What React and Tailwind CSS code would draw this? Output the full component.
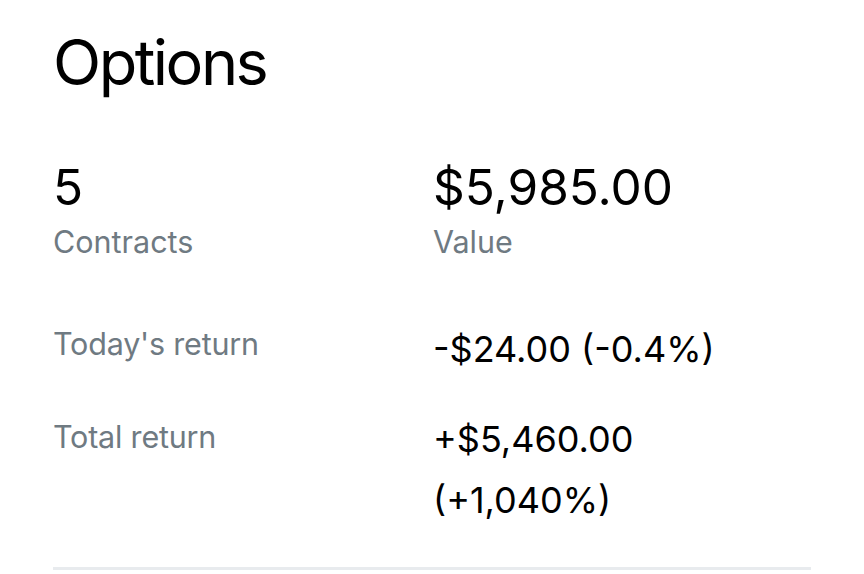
export default function App() {
  return (
    <div className="w-[864px] h-[574px] bg-white overflow-hidden" style={{ fontFamily: "Inter, 'Noto Sans', sans-serif" }}>
      <div className="pl-[53px] pr-[53px] pt-[31px]">
        <h1 className="text-[63px] leading-[63px] text-black font-normal tracking-[-2.5px]">Options</h1>
        <div className="grid grid-cols-[380px_1fr] mt-[65px]">
          <div>
            <div className="text-[49.5px] leading-[56px] text-black">5</div>
            <div className="mt-[7px] text-[30.5px] leading-[40px] text-[#6f7a82]">Contracts</div>
          </div>
          <div>
            <div className="text-[49.5px] leading-[56px] text-black">$5,985.00</div>
            <div className="mt-[7px] text-[30.5px] leading-[40px] text-[#6f7a82]">Value</div>
          </div>
        </div>
        <div className="grid grid-cols-[380px_1fr] mt-[62px]">
          <div className="text-[30.5px] leading-[40px] text-[#6f7a82] tracking-[-0.2px]">Today's return</div>
          <div className="text-[36px] leading-[50px] text-black">-$24.00 (-0.4%)</div>
        </div>
        <div className="grid grid-cols-[380px_1fr] mt-[35px]">
          <div className="mt-[8px] text-[30.5px] leading-[40px] text-[#6f7a82] tracking-[-0.2px]">Total return</div>
          <div className="text-[36px] leading-[61px] text-black">+$5,460.00<br />(+1,040%)</div>
        </div>
        <div className="mt-[36px] h-[3px] bg-[#e8ebee]" />
      </div>
    </div>
  );
}
